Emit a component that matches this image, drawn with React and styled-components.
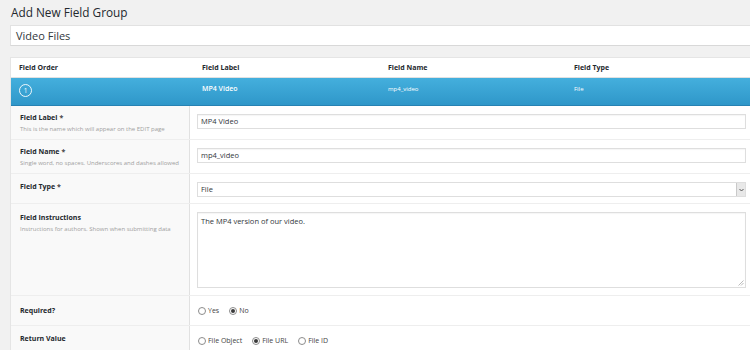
import React from "react";
import styled, { createGlobalStyle } from "styled-components";

const Global = createGlobalStyle`
  html, body { margin: 0; padding: 0; background: #f1f1f1; overflow: hidden; }
  body { font-family: "Open Sans", "Noto Sans", sans-serif; color: #23282d; }
  * { box-sizing: border-box; }
`;

const Page = styled.div`
  width: 760px;
  padding: 0 0 0 10px;
`;

const Title = styled.h1`
  margin: 0;
  padding: 3px 0 0 1px;
  height: 25px;
  font-size: 11.8px;
  font-weight: 400;
  line-height: 18px;
  color: #23282d;
`;

const TitleInput = styled.div`
  height: 21px;
  background: #fff;
  border: 1px solid #e2e2e2;
  border-bottom-color: #d8d8d8;
  padding: 0 5px;
  font-size: 11px;
  line-height: 19px;
  color: #32373c;
`;

const Table = styled.div`
  margin-top: 11px;
  background: #fff;
  border: 1px solid #e5e5e5;
  border-right: none;
`;

const HeadRow = styled.div`
  display: grid;
  grid-template-columns: 183px 186px 186px 1fr;
  height: 20px;
  align-items: center;
  border-bottom: 1px solid #e1e1e1;
`;

const HeadCell = styled.div`
  padding-left: 8px;
  font-size: 7px;
  font-weight: 700;
  color: #23282d;
`;

const FieldRow = styled.div`
  display: grid;
  grid-template-columns: 183px 186px 186px 1fr;
  height: 28px;
  background: linear-gradient(#44afdd, #2f97c9);
  border-bottom: 1px solid #2782b3;
  color: #fff;
`;

const FieldCell = styled.div`
  padding: 7px 0 0 8px;
  font-size: ${(p) => (p.$bold ? 7 : 6)}px;
  font-weight: ${(p) => (p.$bold ? 600 : 400)};
  line-height: 8px;
`;

const OrderBadge = styled.div`
  width: 13px;
  height: 13px;
  margin-top: -1px;
  border: 1px solid rgba(255, 255, 255, 0.9);
  border-radius: 50%;
  font-size: 6.5px;
  line-height: 11px;
  text-align: center;
  color: #fff;
`;

const Row = styled.div`
  display: grid;
  grid-template-columns: 179px 1fr;
  height: ${(p) => p.$h}px;
  border-bottom: 1px solid #eeeeee;
`;

const LabelCell = styled.div`
  background: #f9f9f9;
  border-right: 1px solid #e1e1e1;
  padding: ${(p) => p.$pt || 7}px 9px 0;
  white-space: nowrap;
`;

const Label = styled.div`
  font-size: 7px;
  font-weight: 700;
  line-height: 10px;
  color: #23282d;
`;

const Req = styled.span`
  color: #444;
  margin-left: 2px;
`;

const Desc = styled.div`
  font-size: 6px;
  line-height: 10px;
  color: #a0a0a0;
  margin-top: 1px;
`;

const InputCell = styled.div`
  padding: ${(p) => (p.$pt === undefined ? 8 : p.$pt)}px 14px 0 7px;
`;

const TextInput = styled.div`
  height: 15px;
  background: #fff;
  border: 1px solid #dedede;
  box-shadow: inset 0 1px 1px rgba(0, 0, 0, 0.04);
  padding: 0 3px;
  font-size: 7.5px;
  line-height: 13px;
  color: #32373c;
`;

const SelectBox = styled.div`
  display: flex;
  justify-content: space-between;
  height: 15px;
  background: #fff;
  border: 1px solid #dedede;
  font-size: 7.5px;
  line-height: 13px;
  color: #32373c;
  padding-left: 3px;
`;

const ArrowBox = styled.div`
  width: 9px;
  height: 13px;
  background: #e8e8e8;
  border-left: 1px solid #c9c9c9;
  display: flex;
  align-items: center;
  justify-content: center;
`;

const TextArea = styled.div`
  position: relative;
  height: 76px;
  background: #fff;
  border: 1px solid #dedede;
  box-shadow: inset 0 1px 1px rgba(0, 0, 0, 0.04);
  padding: 3px 3px;
  font-size: 7.5px;
  line-height: 10px;
  color: #32373c;
`;

const Grip = styled.svg`
  position: absolute;
  right: 1px;
  bottom: 1px;
`;

const RadioList = styled.div`
  display: flex;
  align-items: center;
  gap: 10px;
  padding-top: ${(p) => p.$pt}px;
  padding-left: 1px;
`;

const RadioItem = styled.label`
  display: flex;
  align-items: center;
  gap: 2px;
  font-size: 7px;
  line-height: 10px;
  color: #444;
`;

const RadioCircle = styled.span`
  width: 8px;
  height: 8px;
  border-radius: 50%;
  border: 1px solid #8c8c8c;
  background: #fff;
  display: flex;
  align-items: center;
  justify-content: center;
  &::after {
    content: "";
    width: 4px;
    height: 4px;
    border-radius: 50%;
    background: ${(p) => (p.$checked ? "#3a3a3a" : "transparent")};
  }
`;

const Radio = ({ label, checked }) => (
  <RadioItem>
    <RadioCircle $checked={checked} />
    {label}
  </RadioItem>
);

export default function App() {
  return (
    <>
      <Global />
      <Page>
        <Title>Add New Field Group</Title>
        <TitleInput>Video Files</TitleInput>
        <Table>
          <HeadRow>
            <HeadCell>Field Order</HeadCell>
            <HeadCell>Field Label</HeadCell>
            <HeadCell>Field Name</HeadCell>
            <HeadCell>Field Type</HeadCell>
          </HeadRow>
          <FieldRow>
            <FieldCell>
              <OrderBadge>1</OrderBadge>
            </FieldCell>
            <FieldCell $bold>MP4 Video</FieldCell>
            <FieldCell>mp4_video</FieldCell>
            <FieldCell>File</FieldCell>
          </FieldRow>

          <Row $h={34}>
            <LabelCell>
              <Label>
                Field Label<Req>*</Req>
              </Label>
              <Desc>This is the name which will appear on the EDIT page</Desc>
            </LabelCell>
            <InputCell>
              <TextInput>MP4 Video</TextInput>
            </InputCell>
          </Row>

          <Row $h={34}>
            <LabelCell>
              <Label>
                Field Name<Req>*</Req>
              </Label>
              <Desc>Single word, no spaces. Underscores and dashes allowed</Desc>
            </LabelCell>
            <InputCell>
              <TextInput>mp4_video</TextInput>
            </InputCell>
          </Row>

          <Row $h={30}>
            <LabelCell $pt={8}>
              <Label>
                Field Type<Req>*</Req>
              </Label>
            </LabelCell>
            <InputCell>
              <SelectBox>
                File
                <ArrowBox>
                  <svg width="5" height="4" viewBox="0 0 5 4">
                    <path d="M0.5 1 L2.5 3 L4.5 1" fill="none" stroke="#555" strokeWidth="1" />
                  </svg>
                </ArrowBox>
              </SelectBox>
            </InputCell>
          </Row>

          <Row $h={92}>
            <LabelCell $pt={9}>
              <Label>Field Instructions</Label>
              <Desc>Instructions for authors. Shown when submitting data</Desc>
            </LabelCell>
            <InputCell $pt={8}>
              <TextArea>
                The MP4 version of our video.
                <Grip width="6" height="6" viewBox="0 0 6 6">
                  <path d="M5.5 0.5 L0.5 5.5 M5.5 3 L3 5.5" stroke="#bbb" strokeWidth="1" />
                </Grip>
              </TextArea>
            </InputCell>
          </Row>

          <Row $h={30}>
            <LabelCell $pt={10}>
              <Label>Required?</Label>
            </LabelCell>
            <InputCell $pt={0}>
              <RadioList $pt={10}>
                <Radio label="Yes" />
                <Radio label="No" checked />
              </RadioList>
            </InputCell>
          </Row>

          <Row $h={30}>
            <LabelCell $pt={8}>
              <Label>Return Value</Label>
            </LabelCell>
            <InputCell $pt={0}>
              <RadioList $pt={10}>
                <Radio label="File Object" />
                <Radio label="File URL" checked />
                <Radio label="File ID" />
              </RadioList>
            </InputCell>
          </Row>
        </Table>
      </Page>
    </>
  );
}
